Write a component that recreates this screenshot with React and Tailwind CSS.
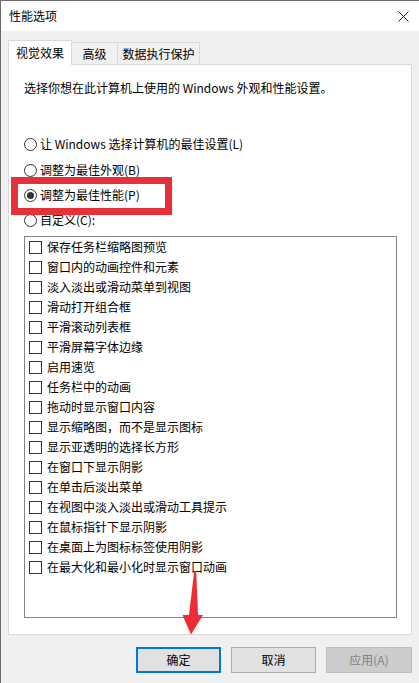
import React from "react";

const items = [
  "保存任务栏缩略图预览",
  "窗口内的动画控件和元素",
  "淡入淡出或滑动菜单到视图",
  "滑动打开组合框",
  "平滑滚动列表框",
  "平滑屏幕字体边缘",
  "启用速览",
  "任务栏中的动画",
  "拖动时显示窗口内容",
  "显示缩略图，而不是显示图标",
  "显示亚透明的选择长方形",
  "在窗口下显示阴影",
  "在单击后淡出菜单",
  "在视图中淡入淡出或滑动工具提示",
  "在鼠标指针下显示阴影",
  "在桌面上为图标标签使用阴影",
  "在最大化和最小化时显示窗口动画",
];

function Radio({ checked, label, className = "" }) {
  return (
    <div className={`flex items-center h-[16px] ${className}`}>
      <div className="w-[13px] h-[13px] rounded-full border border-[#333] bg-white flex items-center justify-center shrink-0">
        {checked && <div className="w-[7px] h-[7px] rounded-full bg-[#333]" />}
      </div>
      <span className="ml-[3px]">{label}</span>
    </div>
  );
}

export default function App() {
  return (
    <div
      className="relative w-[419px] h-[683px] bg-[#f0f0f0] text-[12px] leading-[16px] text-black overflow-hidden border-l border-t border-[#6b6b6b]"
      style={{ fontFamily: '"Noto Sans CJK SC", "Microsoft YaHei", sans-serif' }}
    >
      {/* title bar */}
      <div className="h-[30px] bg-white flex items-center justify-between pl-[8px] pr-[9px]">
        <span>性能选项</span>
        <svg width="11" height="11" viewBox="0 0 11 11" className="mr-[1px]">
          <path d="M0.5 0.5 L10.5 10.5 M10.5 0.5 L0.5 10.5" stroke="#222" strokeWidth="1" />
        </svg>
      </div>

      {/* body */}
      <div className="pl-[7px] pr-[7px] pt-[9px]">
        {/* tabs */}
        <div className="flex items-end h-[24px] relative z-10 pl-[0px]">
          <div className="h-[25px] w-[64px] bg-white border border-b-0 border-[#d9d9d9] flex items-center justify-center mb-[-1px]">
            视觉效果
          </div>
          <div className="h-[22px] w-[46px] bg-[#f0f0f0] border border-l-0 border-b-0 border-[#d9d9d9] flex items-center justify-center">
            高级
          </div>
          <div className="h-[22px] w-[82px] bg-[#f0f0f0] border border-l-0 border-b-0 border-[#d9d9d9] flex items-center justify-center">
            数据执行保护
          </div>
        </div>

        {/* panel */}
        <div className="h-[571px] w-[404px] bg-white border border-[#d9d9d9] pl-[15px] pr-[12px] pt-[15px] flex flex-col">
          <div>选择你想在此计算机上使用的 Windows 外观和性能设置。</div>
          <Radio className="mt-[40px]" label="让 Windows 选择计算机的最佳设置(L)" />
          <Radio className="mt-[10px]" label="调整为最佳外观(B)" />
          <Radio className="mt-[9px]" checked label="调整为最佳性能(P)" />
          <Radio className="mt-[9px]" label="自定义(C):" />

          <div className="mt-[8px] w-[373px] h-[382px] border border-[#828282] bg-white">
            {items.map((t) => (
              <div key={t} className="h-[20px] flex items-center pl-[4px]">
                <div className="w-[13px] h-[13px] border border-[#333] bg-white shrink-0" />
                <span className="ml-[5px]">{t}</span>
              </div>
            ))}
          </div>
        </div>

        {/* buttons */}
        <div className="flex justify-end gap-[10px] mt-[12px] pr-[0px]">
          <div className="w-[85px] h-[26px] bg-[#e1e1e1] border-2 border-[#0078d7] flex items-center justify-center">
            确定
          </div>
          <div className="w-[85px] h-[26px] bg-[#e1e1e1] border border-[#adadad] flex items-center justify-center">
            取消
          </div>
          <div className="w-[86px] h-[26px] bg-[#cccccc] border border-[#bfbfbf] text-[#838383] flex items-center justify-center">
            应用(A)
          </div>
        </div>
      </div>

      {/* red highlight box annotation */}
      <div className="absolute left-[10px] top-[176px] w-[161px] h-[38px] border-[7px] border-[#e8303a] pointer-events-none" />

      {/* red arrow annotation */}
      <svg
        className="absolute left-[179px] top-[568px] pointer-events-none"
        width="26"
        height="70"
        viewBox="0 0 26 70"
      >
        <path
          d="M14.2 2 L16.2 2 L18 46 L23 46 L11 65.5 L2.5 46 L9 46 Z"
          fill="#ec2d33"
        />
      </svg>
    </div>
  );
}
